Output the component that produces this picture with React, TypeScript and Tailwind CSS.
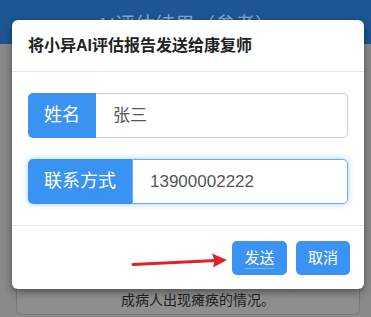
import React from 'react'

const font = { fontFamily: '"Liberation Sans", "Noto Sans CJK SC", sans-serif' }

function InputGroup({ label, value, focused }: { label: string; value: string; focused?: boolean }) {
  return (
    <div
      className={`flex h-[45px] rounded-[5px] ${
        focused ? 'shadow-[0_0_6px_rgba(102,175,233,0.6)]' : ''
      }`}
    >
      <div className="flex items-center rounded-l-[5px] bg-[#3a92f2] px-[16px] text-[18px] text-white">
        {label}
      </div>
      <div
        className={`flex flex-1 items-center rounded-r-[5px] border px-[17px] text-[17px] text-[#555] ${
          focused ? 'border-[#66afe9]' : 'border-l-0 border-[#ccc]'
        }`}
      >
        {value}
      </div>
    </div>
  )
}

export default function App() {
  return (
    <div className="relative h-[317px] w-[371px] overflow-hidden bg-[#8a8a8a]" style={font}>
      {/* page behind the overlay */}
      <div className="flex h-[44px] items-start justify-center bg-[#1e5694] pt-[10px] text-[20px] text-[#8fa4c2]">
        AI评估结果（参考）
      </div>
      <div className="flex h-[273px] flex-col justify-end pb-[2px] pl-[16px] pr-[11px]">
        <div className="flex h-[60px] items-end rounded-b-[6px] border border-t-0 border-[#777] bg-[#8e8e8e] pb-[3px] pl-[104px] text-[14px] text-[#222]">
          成病人出现瘫痪的情况。
        </div>
      </div>

      {/* modal */}
      <div className="absolute left-[12px] top-[20px] flex h-[269px] w-[352px] flex-col rounded-[6px] bg-white shadow-[0_3px_8px_rgba(0,0,0,0.45)]">
        <div className="flex h-[52px] items-center border-b border-[#e5e5e5] px-[16px] text-[16px] font-bold text-[#222]">
          将小异AI评估报告发送给康复师
        </div>
        <div className="flex flex-col gap-[21px] px-[16px] py-[21px]">
          <InputGroup label="姓名" value="张三" />
          <InputGroup label="联系方式" value="13900002222" focused />
        </div>
        <div className="flex flex-1 items-start justify-end gap-[9px] border-t border-[#e5e5e5] pr-[14px] pt-[15px]">
          <button className="h-[34px] w-[55px] rounded-[5px] bg-[#3a92f2] text-[15px] text-white underline decoration-white/30 underline-offset-[5px]">
            发送
          </button>
          <button className="h-[34px] w-[54px] rounded-[5px] bg-[#3a92f2] text-[15px] text-white">
            取消
          </button>
        </div>
      </div>

      {/* annotation arrow */}
      <svg className="absolute left-0 top-0" width="371" height="317" viewBox="0 0 371 317">
        <line x1="133" y1="264.5" x2="216" y2="260.6" stroke="#e0202a" strokeWidth="3" strokeLinecap="round" />
        <polygon points="227,260 212,253.5 214.5,260.7 213,267.5" fill="#e0202a" />
      </svg>
    </div>
  )
}
